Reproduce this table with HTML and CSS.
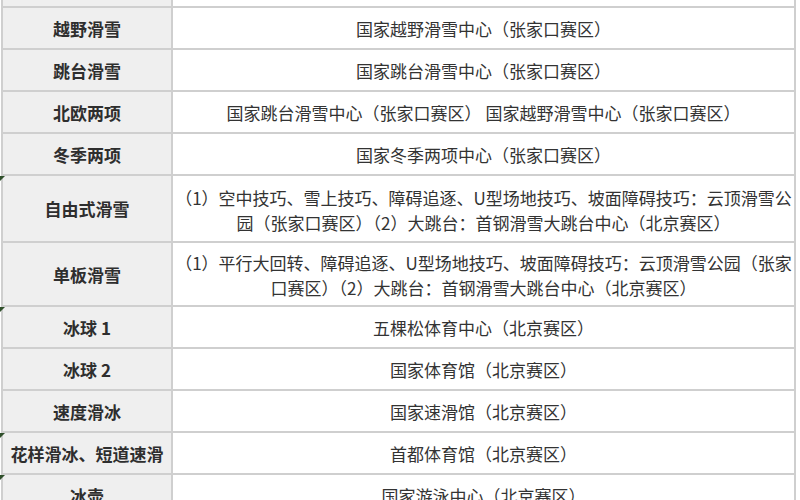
FILE: index.html
```html
<!DOCTYPE html>
<html lang="zh-CN">
<head>
<meta charset="utf-8">
<link rel="stylesheet" href="styles.css">
<title>冬奥会场馆</title>
</head>
<body>
<div class="table">
  <div class="row partial"><div class="cell head"></div><div class="cell val"></div></div>
  <div class="row"><div class="cell head">越野滑雪</div><div class="cell val">国家越野滑雪中心（张家口赛区）</div></div>
  <div class="row"><div class="cell head">跳台滑雪</div><div class="cell val">国家跳台滑雪中心（张家口赛区）</div></div>
  <div class="row"><div class="cell head">北欧两项</div><div class="cell val">国家跳台滑雪中心（张家口赛区） 国家越野滑雪中心（张家口赛区）</div></div>
  <div class="row"><div class="cell head">冬季两项</div><div class="cell val">国家冬季两项中心（张家口赛区）</div></div>
  <div class="row tall-a"><div class="cell head mark">自由式滑雪</div><div class="cell val multi">（1）空中技巧、雪上技巧、障碍追逐、U型场地技巧、坡面障碍技巧：云顶滑雪公<br>园（张家口赛区）（2）大跳台：首钢滑雪大跳台中心（北京赛区）</div></div>
  <div class="row tall-b"><div class="cell head">单板滑雪</div><div class="cell val multi">（1）平行大回转、障碍追逐、U型场地技巧、坡面障碍技巧：云顶滑雪公园（张家<br>口赛区）（2）大跳台：首钢滑雪大跳台中心（北京赛区）</div></div>
  <div class="row"><div class="cell head mark">冰球 1</div><div class="cell val">五棵松体育中心（北京赛区）</div></div>
  <div class="row"><div class="cell head">冰球 2</div><div class="cell val">国家体育馆（北京赛区）</div></div>
  <div class="row"><div class="cell head">速度滑冰</div><div class="cell val">国家速滑馆（北京赛区）</div></div>
  <div class="row"><div class="cell head mark">花样滑冰、短道速滑</div><div class="cell val">首都体育馆（北京赛区）</div></div>
  <div class="row"><div class="cell head mark">冰壶</div><div class="cell val">国家游泳中心（北京赛区）</div></div>
</div>
</body>
</html>
```

FILE: styles.css
```css
html, body {
  margin: 0;
  padding: 0;
  background: #ffffff;
}

body {
  font-family: "Noto Sans CJK SC", "Noto Sans", sans-serif;
  color: #333333;
  font-size: 17px;
  overflow: hidden;
}

.table {
  margin-left: 1px;
  width: 795px;
  border-left: 2px solid #cfcfcf;
  box-sizing: border-box;
}

.row {
  display: flex;
  height: 42px;
}

.row.partial {
  height: 8px;
}

.row.tall-a {
  height: 67px;
}

.row.tall-b {
  height: 64px;
}

.cell {
  box-sizing: border-box;
  border-bottom: 2px solid #cfcfcf;
  border-right: 2px solid #cfcfcf;
  display: flex;
  align-items: center;
  justify-content: center;
  text-align: center;
  white-space: nowrap;
  position: relative;
}

.head {
  width: 170px;
  background: #efefef;
  font-weight: bold;
  color: #2e2e2e;
}

.val {
  width: 623px;
  background: #ffffff;
  padding: 0 2px;
}

.multi {
  line-height: 25px;
  padding-top: 2px;
}

.mark::before {
  content: "";
  position: absolute;
  left: -3px;
  top: 0;
  width: 0;
  height: 0;
  border-top: 5px solid #2f4f2a;
  border-right: 5px solid transparent;
}
```
